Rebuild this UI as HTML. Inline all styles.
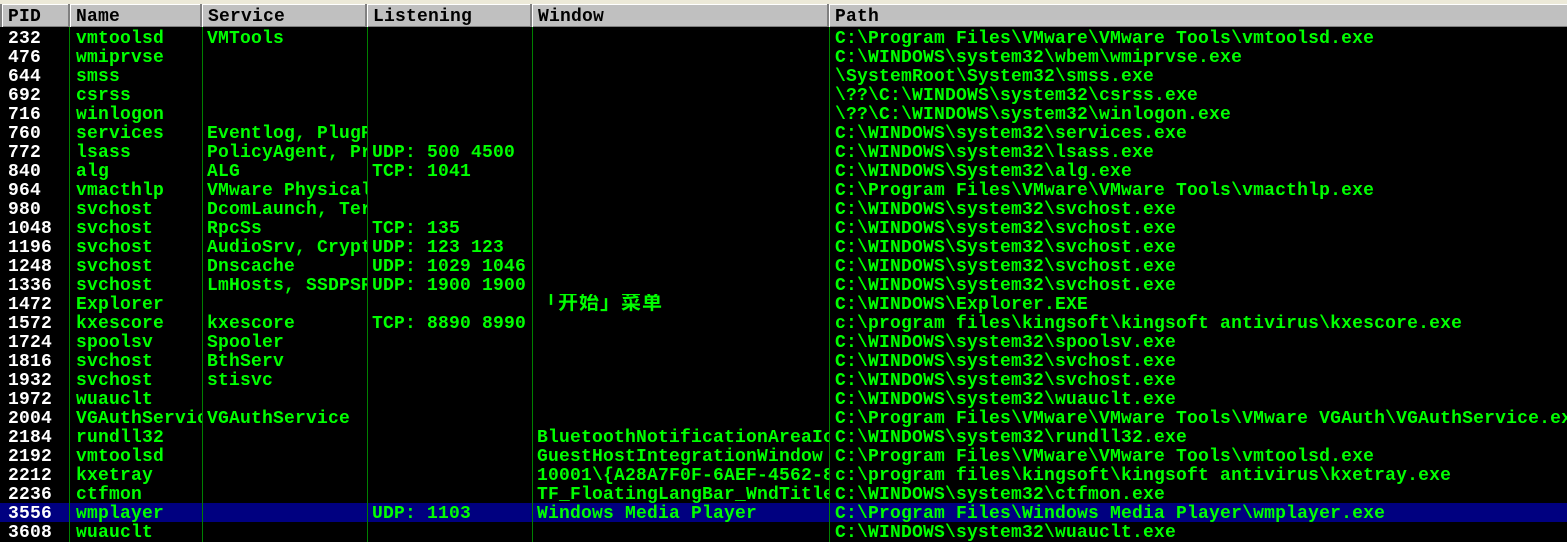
<!DOCTYPE html>
<html><head><meta charset="utf-8"><style>
body{margin:0;width:1567px;height:542px;background:#000;overflow:hidden;position:relative;font-family:"Liberation Mono","Noto Sans CJK SC",monospace;font-weight:bold;font-size:18px;letter-spacing:0.2px}
.top{position:absolute;left:0;top:0;width:1567px;height:4px;background:#ece9d8}
.hdr{position:absolute;left:0;top:4px;width:1567px;height:23px;background:#c0c0c0;border-top:1px solid #fff;border-bottom:1px solid #808080;box-sizing:border-box}
.h{position:absolute;top:4px;height:23px;line-height:27px;color:#000;border-left:1px solid #fff;box-shadow:-2px 0 0 #808080;padding-left:5px;box-sizing:border-box;overflow:hidden}
.v{position:absolute;top:27px;bottom:0;width:1px;background:#008000}
.sel{position:absolute;left:0;top:503px;width:1567px;height:19px;background:#000080}
.c{position:absolute;height:19px;line-height:23px;overflow:hidden;white-space:pre;color:#00ff00}
.w{color:#fff}
</style></head><body>
<div class="top"></div><div class="hdr"></div>
<div class="h" style="left:2px;width:68px">PID</div>
<div class="h" style="left:70px;width:132px">Name</div>
<div class="h" style="left:202px;width:165px">Service</div>
<div class="h" style="left:367px;width:165px">Listening</div>
<div class="h" style="left:532px;width:297px">Window</div>
<div class="h" style="left:829px;width:738px">Path</div>
<div class="sel"></div>
<div class="v" style="left:69px"></div><div class="v" style="left:202px"></div><div class="v" style="left:367px"></div><div class="v" style="left:532px"></div><div class="v" style="left:829px"></div>
<div id="rows"></div>
<script>
var d=[
["232","vmtoolsd","VMTools","","","C:\\Program Files\\VMware\\VMware Tools\\vmtoolsd.exe"],
["476","wmiprvse","","","","C:\\WINDOWS\\system32\\wbem\\wmiprvse.exe"],
["644","smss","","","","\\SystemRoot\\System32\\smss.exe"],
["692","csrss","","","","\\??\\C:\\WINDOWS\\system32\\csrss.exe"],
["716","winlogon","","","","\\??\\C:\\WINDOWS\\system32\\winlogon.exe"],
["760","services","Eventlog, PlugPlay","","","C:\\WINDOWS\\system32\\services.exe"],
["772","lsass","PolicyAgent, ProtectedStorage","UDP: 500 4500","","C:\\WINDOWS\\system32\\lsass.exe"],
["840","alg","ALG","TCP: 1041","","C:\\WINDOWS\\System32\\alg.exe"],
["964","vmacthlp","VMware Physical Disk","","","C:\\Program Files\\VMware\\VMware Tools\\vmacthlp.exe"],
["980","svchost","DcomLaunch, TermService","","","C:\\WINDOWS\\system32\\svchost.exe"],
["1048","svchost","RpcSs","TCP: 135","","C:\\WINDOWS\\system32\\svchost.exe"],
["1196","svchost","AudioSrv, CryptSvc","UDP: 123 123","","C:\\WINDOWS\\System32\\svchost.exe"],
["1248","svchost","Dnscache","UDP: 1029 1046","","C:\\WINDOWS\\system32\\svchost.exe"],
["1336","svchost","LmHosts, SSDPSRV","UDP: 1900 1900","","C:\\WINDOWS\\system32\\svchost.exe"],
["1472","Explorer","","","「开始」菜单","C:\\WINDOWS\\Explorer.EXE"],
["1572","kxescore","kxescore","TCP: 8890 8990","","c:\\program files\\kingsoft\\kingsoft antivirus\\kxescore.exe"],
["1724","spoolsv","Spooler","","","C:\\WINDOWS\\system32\\spoolsv.exe"],
["1816","svchost","BthServ","","","C:\\WINDOWS\\system32\\svchost.exe"],
["1932","svchost","stisvc","","","C:\\WINDOWS\\system32\\svchost.exe"],
["1972","wuauclt","","","","C:\\WINDOWS\\system32\\wuauclt.exe"],
["2004","VGAuthService","VGAuthService","","","C:\\Program Files\\VMware\\VMware Tools\\VMware VGAuth\\VGAuthService.exe"],
["2184","rundll32","","","BluetoothNotificationAreaIconWindowClass","C:\\WINDOWS\\system32\\rundll32.exe"],
["2192","vmtoolsd","","","GuestHostIntegrationWindow","C:\\Program Files\\VMware\\VMware Tools\\vmtoolsd.exe"],
["2212","kxetray","","","10001\\{A28A7F0F-6AEF-4562-8","c:\\program files\\kingsoft\\kingsoft antivirus\\kxetray.exe"],
["2236","ctfmon","","","TF_FloatingLangBar_WndTitle","C:\\WINDOWS\\system32\\ctfmon.exe"],
["3556","wmplayer","","UDP: 1103","Windows Media Player","C:\\Program Files\\Windows Media Player\\wmplayer.exe"],
["3608","wuauclt","","","","C:\\WINDOWS\\system32\\wuauclt.exe"]];
var L=[[8,61],[76,126],[207,160],[372,160],[537,292],[835,732]],h="";
d.forEach(function(r,i){var y=28+i*19;r.forEach(function(t,j){if(!t)return;var s=j==4&&t.indexOf("开")>=0?"font-size:20px;letter-spacing:1px;line-height:21px;":"";h+='<div class="c'+(j==0?' w':'')+'" style="'+s+'left:'+L[j][0]+'px;width:'+L[j][1]+'px;top:'+y+'px">'+t.replace(/&/g,"&amp;").replace(/</g,"&lt;")+'</div>';});});
document.getElementById("rows").innerHTML=h;
</script>
</body></html>
